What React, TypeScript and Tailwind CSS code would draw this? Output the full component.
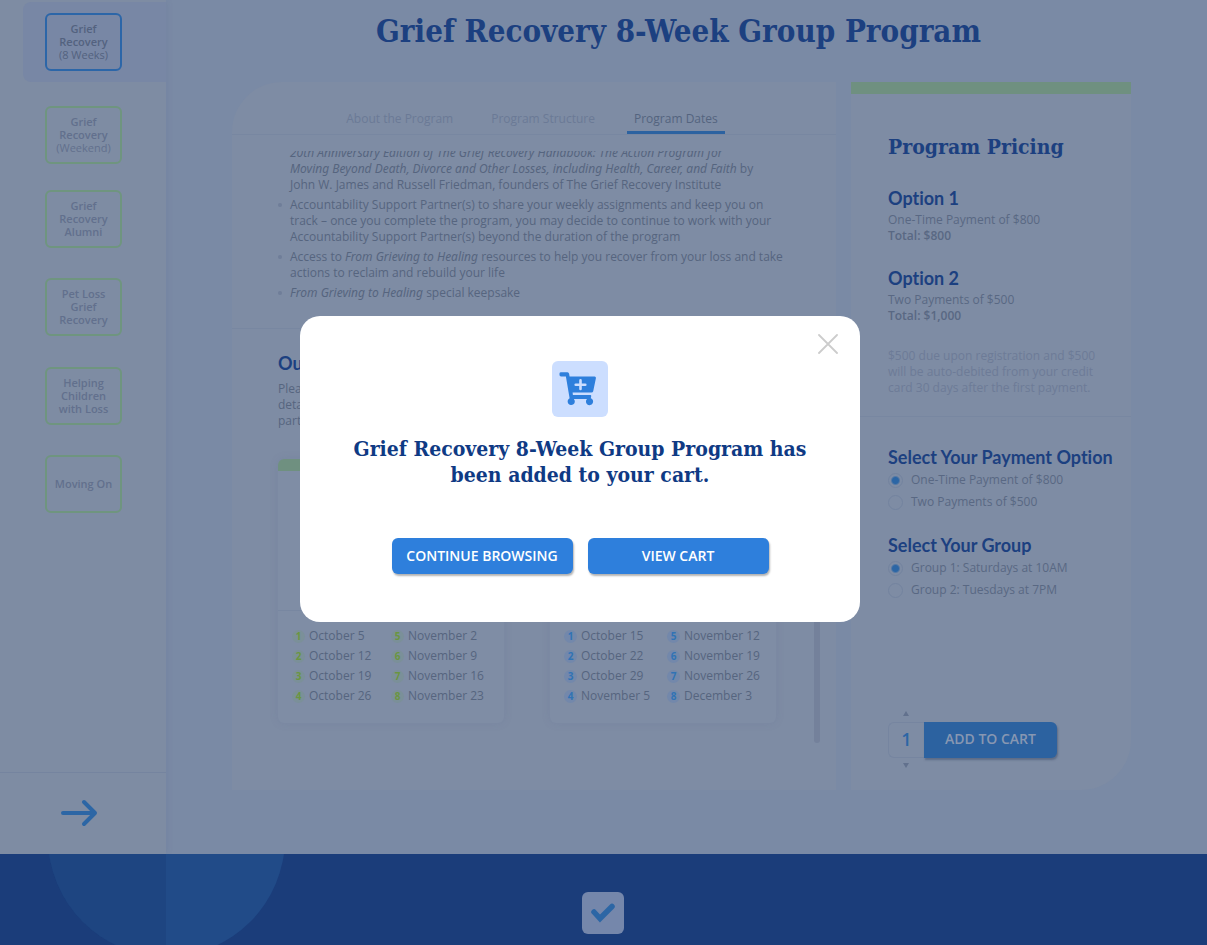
import React from "react";

const serif = "font-['DejaVu_Serif_Condensed','DejaVu_Serif','Liberation_Serif',serif]";

type Program = { lines: string[]; light?: string; gap: string };

const programs: Program[] = [
  { lines: ["Grief", "Recovery"], light: "(Weekend)", gap: "mt-[24px]" },
  { lines: ["Grief", "Recovery", "Alumni"], gap: "mt-[26px]" },
  { lines: ["Pet Loss", "Grief", "Recovery"], gap: "mt-[30px]" },
  { lines: ["Helping", "Children", "with Loss"], gap: "mt-[31px]" },
  { lines: ["Moving On"], gap: "mt-[30px]" },
];

function ProgramLabel({ lines, light }: { lines: string[]; light?: string }) {
  return (
    <>
      {lines.map((line) => (
        <span key={line} className="font-semibold">
          {line}
        </span>
      ))}
      {light && <span>{light}</span>}
    </>
  );
}

function Sidebar() {
  return (
    <aside className="flex w-[166px] shrink-0 flex-col bg-[#7e8ca3] shadow-[1px_0_6px_rgba(70,90,130,0.12)]">
      <nav className="flex flex-1 flex-col pt-[2px] text-[11px] leading-[13px]">
        <div className="ml-[23px] rounded-l-lg bg-[#7887a5] py-[11px] pl-[22px]">
          <a
            href="#eight-week"
            className="flex h-[58px] w-[77px] flex-col items-center justify-center rounded-md border-2 border-[#2c66a8] pb-[2px] text-[#53627f]"
          >
            <ProgramLabel lines={["Grief", "Recovery"]} light="(8 Weeks)" />
          </a>
        </div>
        {programs.map((p) => (
          <a
            key={p.lines.join(" ") + (p.light ?? "")}
            href="#program"
            className={`${p.gap} ml-[45px] flex h-[58px] w-[77px] flex-col items-center justify-center rounded-md border-2 border-[#6f957f] pb-[2px] text-[#62708d]`}
          >
            <ProgramLabel lines={p.lines} light={p.light} />
          </a>
        ))}
      </nav>
      <div className="flex h-[82px] items-center justify-center border-t border-[#75849f] pr-2 pb-[2px]">
        <a href="#next" aria-label="Next">
          <svg className="block" width="38" height="28" viewBox="0 0 38 28" fill="none" stroke="#2c66a5" strokeWidth="4" strokeLinecap="round" strokeLinejoin="round">
            <path d="M3 14H34M24 3L35 14L24 25" />
          </svg>
        </a>
      </div>
    </aside>
  );
}

function Bullet({ children }: { children: React.ReactNode }) {
  return (
    <li className="flex gap-[8px]">
      <span className="mt-[6px] size-[4px] shrink-0 rounded-full bg-[#6f7e99]" />
      <div className="whitespace-nowrap">{children}</div>
    </li>
  );
}

function Em({ children }: { children: React.ReactNode }) {
  return <em className="font-['Noto_Sans','Open_Sans',sans-serif]">{children}</em>;
}

const saturday = ["October 5", "October 12", "October 19", "October 26", "November 2", "November 9", "November 16", "November 23"];
const tuesday = ["October 15", "October 22", "October 29", "November 5", "November 12", "November 19", "November 26", "December 3"];

function DateCard({ dates, bar, badge, columns }: { dates: string[]; bar: string; badge: string; columns: string }) {
  return (
    <section className="flex h-[264px] w-[226px] flex-col overflow-hidden rounded-md bg-[#7f8da5] shadow-[0_0_8px_rgba(90,100,140,0.16)]">
      <div className={`h-[12px] ${bar}`} />
      <div className="flex-1 border-b border-[#7887a1]" />
      <ol className={`grid h-[112px] grid-flow-col grid-rows-[repeat(4,20px)] pt-[15px] pl-[14px] ${columns}`}>
        {dates.map((d, i) => (
          <li key={d} className="flex items-center gap-[4px] whitespace-nowrap text-[12px] leading-5">
            <span className={`flex size-[13px] items-center justify-center rounded-full text-[10px] leading-none font-bold ${badge}`}>{i + 1}</span>
            {d}
          </li>
        ))}
      </ol>
    </section>
  );
}

function ProgramCard() {
  return (
    <article className="flex h-[708px] min-w-0 flex-1 flex-col rounded-tl-[50px] bg-[#7e8ca4]">
      <div className="flex h-[53px] items-end justify-center gap-[26px] border-b border-[#7887a1] pr-[3px] text-[12px] text-[#6b7a96]">
        <a href="#about" className="border-b-[3px] border-transparent px-[6px] pb-[3px] leading-[18px]">About the Program</a>
        <a href="#structure" className="border-b-[3px] border-transparent px-[6px] pb-[3px] leading-[18px]">Program Structure</a>
        <a href="#dates" className="border-b-[3px] border-[#2c62a0] px-[7px] pb-[3px] leading-[18px] text-[#54647f]">Program Dates</a>
      </div>
      <div className="mt-[16px] flex h-[178px] flex-col overflow-hidden border-b border-[#7887a1] pl-[46px] text-[12px] leading-[16px] text-[#56657f]">
        <ul className="-mt-[6px] flex flex-col gap-[4px]">
          <li className="pl-[12px] whitespace-nowrap">
            <Em>20th Anniversary Edition of The Grief Recovery Handbook: The Action Program for</Em>
            <br />
            <Em>Moving Beyond Death, Divorce and Other Losses, including Health, Career, and Faith</Em> by
            <br />
            John W. James and Russell Friedman, founders of The Grief Recovery Institute
          </li>
          <Bullet>
            Accountability Support Partner(s) to share your weekly assignments and keep you on
            <br />
            track – once you complete the program, you may decide to continue to work with your
            <br />
            Accountability Support Partner(s) beyond the duration of the program
          </Bullet>
          <Bullet>
            Access to <Em>From Grieving to Healing</Em> resources to help you recover from your loss and take
            <br />
            actions to reclaim and rebuild your life
          </Bullet>
          <Bullet>
            <Em>From Grieving to Healing</Em> special keepsake
          </Bullet>
        </ul>
      </div>
      <div className="flex justify-between pr-[16px] pl-[46px] text-[#56657f]">
        <div className="pt-[22px]">
          <h2 className={heading}>Our Groups</h2>
          <p className="mt-[6px] text-[12px] leading-4">
            Please choose a group
            <br />
            details are listed for
            <br />
            participants
          </p>
          <div className="mt-[30px] flex gap-[46px]">
            <DateCard dates={saturday} bar="bg-[#6f9080]" badge="bg-[#7b9099] text-[#6a9640]" columns="grid-cols-[99px_1fr]" />
            <DateCard dates={tuesday} bar="bg-[#4a7bb0]" badge="bg-[#7388ab] text-[#3073b5]" columns="grid-cols-[103px_1fr]" />
          </div>
        </div>
        <div className="mt-[60px] -mb-[20px] w-[6px] rounded-full bg-[#74819b]" />
      </div>
    </article>
  );
}

function Choice({ name, label, checked }: { name: string; label: string; checked?: boolean }) {
  return (
    <label className="flex h-[22px] items-center gap-[8px] text-[12px] whitespace-nowrap">
      <input
        type="radio"
        name={name}
        defaultChecked={checked}
        className="size-[15px] appearance-none rounded-full border border-[#73839f] checked:bg-[radial-gradient(circle,#2c66a5_3px,transparent_5px)]"
      />
      {label}
    </label>
  );
}

const heading = "font-['Lato','Open_Sans',sans-serif] [font-variant-ligatures:none] text-[18px] leading-6 font-bold text-[#1c4080] whitespace-nowrap";

function PricingCard() {
  return (
    <aside className="flex h-[708px] w-[280px] shrink-0 flex-col rounded-br-[50px] border-t-[12px] border-[#6f9080] bg-[#7e8ca4] text-[12px] leading-4 text-[#596883]">
      <div className="h-[323px] border-b border-[#7887a1] pt-[38px] pl-[37px]">
        <h2 className={`${serif} text-[21px] leading-[30px] font-bold text-[#1c4080]`}>Program Pricing</h2>
        <h3 className={`${heading} mt-[24px]`}>Option 1</h3>
        <p className="mt-[2px]">One-Time Payment of $800</p>
        <p className="font-semibold">Total: $800</p>
        <h3 className={`${heading} mt-[22px]`}>Option 2</h3>
        <p className="mt-[2px]">Two Payments of $500</p>
        <p className="font-semibold">Total: $1,000</p>
        <p className="mt-[24px] text-[#6d7b97]">
          $500 due upon registration and $500
          <br />
          will be auto-debited from your credit
          <br />
          card 30 days after the first payment.
        </p>
      </div>
      <form className="flex flex-1 flex-col pt-[28px] pb-[22px] pl-[37px]">
        <h3 className={heading}>Select Your Payment Option</h3>
        <Choice name="payment" label="One-Time Payment of $800" checked />
        <Choice name="payment" label="Two Payments of $500" />
        <h3 className={`${heading} mt-[20px]`}>Select Your Group</h3>
        <Choice name="group" label="Group 1: Saturdays at 10AM" checked />
        <Choice name="group" label="Group 2: Tuesdays at 7PM" />
        <div className="mt-auto flex w-[36px] justify-center">
          <button type="button" aria-label="Increase quantity" className="flex h-[11px] items-start">
            <svg width="6" height="5" viewBox="0 0 6 5" fill="#62718d"><path d="M3 0L6 5H0Z" /></svg>
          </button>
        </div>
        <div className="flex h-[36px]">
          <input
            aria-label="Quantity"
            defaultValue="1"
            className="w-[36px] rounded-l-md border border-r-0 border-[#7685a0] pb-[2px] text-center text-[18px] font-semibold text-[#2c66a5]"
          />
          <button type="button" className="w-[133px] rounded-r-md bg-[#2c62a0] pb-[2px] text-[14px] font-semibold text-[#8797b2] shadow-[1px_2px_2px_rgba(60,75,105,0.5)]">
            ADD TO CART
          </button>
        </div>
        <div className="flex w-[36px] justify-center">
          <button type="button" aria-label="Decrease quantity" className="flex h-[10px] items-end">
            <svg width="6" height="5" viewBox="0 0 6 5" fill="#62718d"><path d="M0 0H6L3 5Z" /></svg>
          </button>
        </div>
      </form>
    </aside>
  );
}

function Modal() {
  const button = "h-[36px] w-[181px] rounded-md bg-[#2e7fdc] pb-[2px] text-[14px] font-semibold text-white shadow-[1px_2px_2px_rgba(0,0,0,0.3)]";
  return (
    <div className="fixed inset-0 flex items-center justify-center pr-[47px] pb-[7px]">
      <div role="dialog" aria-modal="true" aria-labelledby="dialog-title" className="relative flex w-[560px] flex-col items-center rounded-[20px] bg-white pt-[45px] pb-[48px]">
        <button aria-label="Close" className="absolute top-[18px] right-[22px]">
          <svg width="20" height="20" viewBox="0 0 20 20" fill="none" stroke="#cccccc" strokeWidth="1.8" strokeLinecap="round">
            <path d="M1 1L19 19M19 1L1 19" />
          </svg>
        </button>
        <div className="flex size-[56px] items-center justify-center rounded-md bg-[#ccdeff]">
          <svg width="56" height="56" viewBox="0 0 56 56" fill="#2e7fdc">
            <path d="M9 11.2H15.5Q16.8 11.2 17.1 12.8L17.6 15.6H42.6Q44.2 15.6 43.9 17.2L41.2 30.2Q40.9 31.6 39.4 31.6H20.6L20.9 33.9H38.2Q39.5 33.9 39.2 35.2L38.8 37.2A3.6 3.6 0 1 1 35 38H21.8A3.6 3.6 0 1 1 17.6 37.3L13.9 15.4H9Q7.5 15.4 7.5 14V12.6Q7.5 11.2 9 11.2Z" />
            <path d="M28.5 19.4V28M23.7 23.7H33.3" stroke="#ccdeff" strokeWidth="2.6" strokeLinecap="round" />
          </svg>
        </div>
        <h2 id="dialog-title" className={`${serif} mt-[19px] text-center text-[21px] leading-[26px] font-bold whitespace-nowrap text-[#0f3a84]`}>
          Grief Recovery 8-Week Group Program has
          <br />
          been added to your cart.
        </h2>
        <div className="mt-[50px] flex gap-[15px]">
          <button className={button}>CONTINUE BROWSING</button>
          <button className={button}>VIEW CART</button>
        </div>
      </div>
    </div>
  );
}

export default function App() {
  return (
    <div className="flex min-h-screen flex-col overflow-hidden bg-[#7a8aa5] font-['Open_Sans','Noto_Sans',sans-serif]">
      <div className="flex">
        <Sidebar />
        <main className="min-w-0 flex-1 pr-[76px] pb-[64px] pl-[66px]">
          <h1 className={`${serif} mt-[10px] pr-[6px] text-center text-[31px] leading-[42px] font-bold whitespace-nowrap text-[#1c4080]`}>
            Grief Recovery 8-Week Group Program
          </h1>
          <div className="mt-[30px] flex gap-[15px]">
            <ProgramCard />
            <PricingCard />
          </div>
        </main>
      </div>
      <footer className="relative flex flex-1 justify-center overflow-hidden bg-[#1b3d7a] pt-[38px] pr-[2px] pb-[11px]">
        <svg className="absolute top-0 left-[48px]" width="237" height="103" viewBox="0 0 237 103">
          <circle cx="118.5" cy="-16" r="118.5" fill="#214b88" />
          <path d="M118 0V102.5A118.5 118.5 0 0 1 1 0Z" fill="#16386f" fillOpacity="0.3" />
        </svg>
        <a href="#confirm" aria-label="Confirm" className="relative flex size-[42px] items-center justify-center rounded-md bg-[#7587ab]">
          <svg width="24" height="20" viewBox="0 0 24 20" fill="none" stroke="#2c66a5" strokeWidth="5.5" strokeLinecap="round">
            <path d="M3 9L9 15.5L21 3.5" />
          </svg>
        </a>
      </footer>
      <Modal />
    </div>
  );
}
